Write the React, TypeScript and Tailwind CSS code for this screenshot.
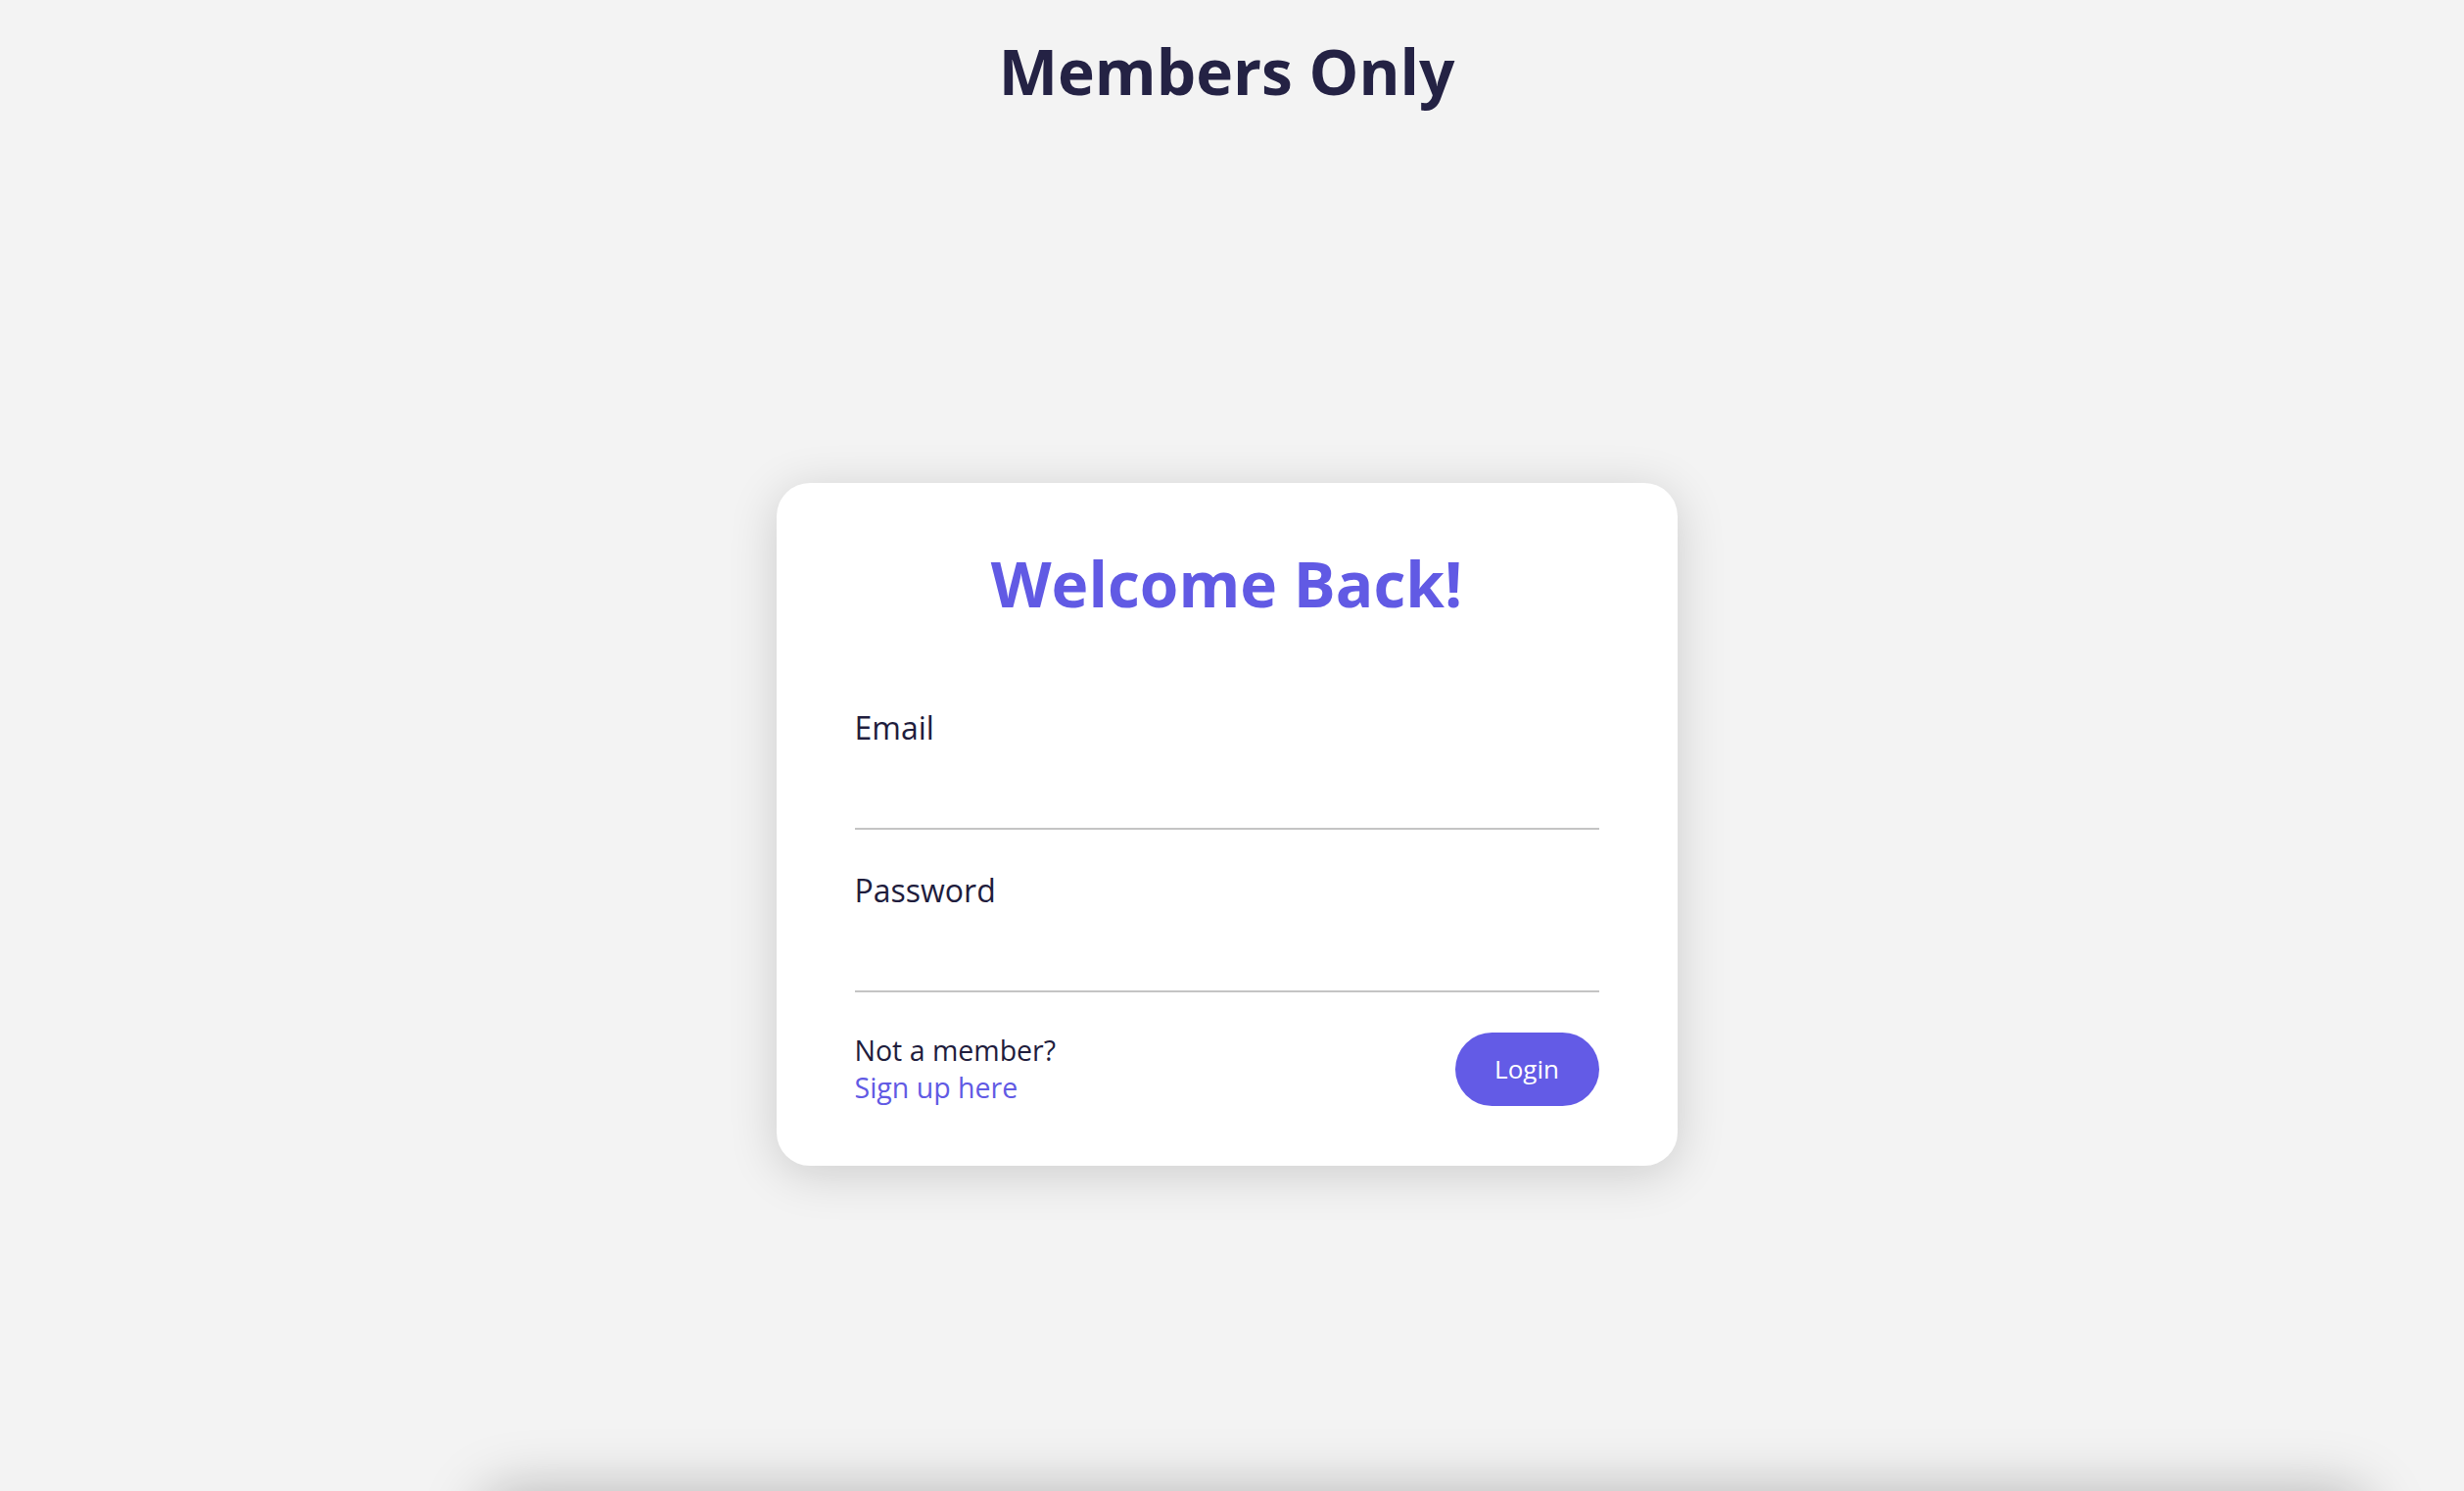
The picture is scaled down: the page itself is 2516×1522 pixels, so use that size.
import { useState } from 'react';

export default function App() {
  const [email, setEmail] = useState('');
  const [password, setPassword] = useState('');

  return (
    <div
      className="h-screen overflow-hidden bg-[#f3f3f3] pr-[11px]"
      style={{ fontFamily: '"Open Sans", "Noto Sans", sans-serif' }}
    >
      {/* Page title */}
      <h1 className="pt-[41px] text-center text-[64px] font-bold leading-none text-[#242244]">
        Members Only
      </h1>

      {/* Login card */}
      <div className="mx-auto mt-[388px] w-[920px] rounded-[34px] bg-white px-[80px] pb-[61px] pt-[71px] shadow-[0_8px_50px_rgba(0,0,0,0.16)]">
        <h2 className="text-center text-[64px] font-bold leading-none text-[#615ae4]">
          Welcome Back!
        </h2>

        <form onSubmit={(e) => e.preventDefault()}>
          <div className="mt-[99px]">
            <label htmlFor="email" className="block text-[32px] leading-none text-[#1f1d3d]">
              Email
            </label>
            <input
              id="email"
              type="email"
              value={email}
              onChange={(e) => setEmail(e.target.value)}
              className="block h-[88px] w-full border-b-2 border-[#c4c4c4] bg-transparent text-[30px] text-[#1f1d3d] outline-none"
            />
          </div>

          <div className="mt-[46px]">
            <label htmlFor="password" className="block text-[32px] leading-none text-[#1f1d3d]">
              Password
            </label>
            <input
              id="password"
              type="password"
              value={password}
              onChange={(e) => setPassword(e.target.value)}
              className="block h-[88px] w-full border-b-2 border-[#c4c4c4] bg-transparent text-[30px] text-[#1f1d3d] outline-none"
            />
          </div>

          <div className="mt-[40px] flex items-center justify-between">
            <div className="text-[28.5px] leading-[38px]">
              <p className="text-[#1f1d3d]">Not a member?</p>
              <a href="#" className="text-[#615ae4]">Sign up here</a>
            </div>
            <button
              type="submit"
              className="flex h-[75px] w-[147px] items-center justify-center rounded-full bg-[#635be6] text-[26px] text-white"
            >
              Login
            </button>
          </div>
        </form>
      </div>

      {/* Next section, just below the fold */}
      <div className="ml-[490px] mt-[332px] h-[300px] w-[1930px] rounded-[34px] bg-[#f3f3f3] shadow-[0_0_60px_rgba(0,0,0,0.26)]" />
    </div>
  );
}
